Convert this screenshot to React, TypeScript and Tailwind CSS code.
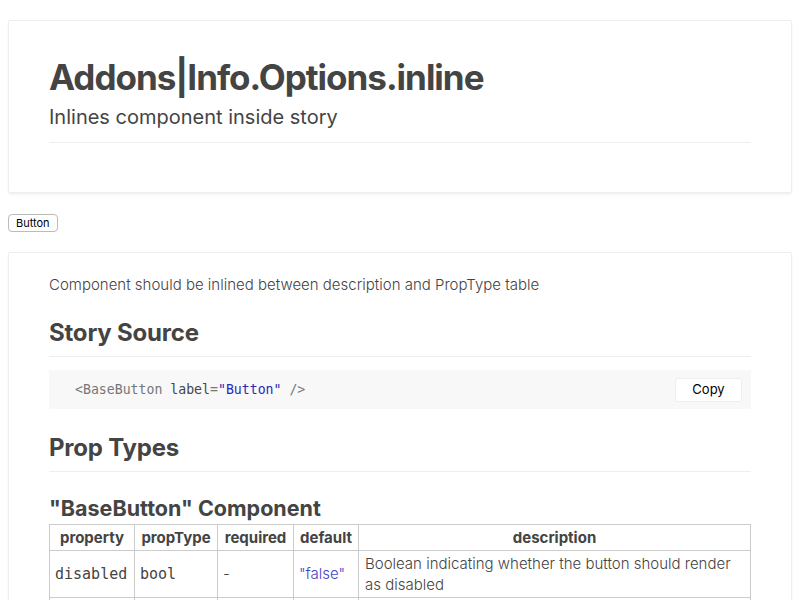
import React from "react";

const sans = { fontFamily: "Inter, 'Noto Sans', sans-serif" };

export default function App() {
  return (
    <div className="min-h-[600px] bg-white p-2 text-[#444]" style={sans}>
      <div className="mt-3 rounded-[2px] border border-[#eee] px-10 pb-[49px] pt-[34px] shadow-[0_2px_3px_rgba(0,0,0,0.05)]">
        <div className="border-b border-[#eee] pb-[11px]">
          <h1 className="m-0 text-[35px] font-bold leading-[44px] tracking-[-1px]">Addons|Info.Options.inline</h1>
          <h2 className="m-0 mt-1 text-[20px] font-normal leading-[28px]">Inlines component inside story</h2>
        </div>
      </div>

      <div className="mt-[21px] flex">
        <button className="h-[18px] rounded-[4px] border border-[#bbb] bg-white px-[7px] text-[11px] leading-[15px] text-black">Button</button>
      </div>

      <div className="mt-[20px] rounded-[2px] border border-[#eee] px-10 pt-[21px] pb-10 shadow-[0_2px_3px_rgba(0,0,0,0.05)]">
        <p className="m-0 text-[15px] font-light leading-[22px]">Component should be inlined between description and PropType table</p>

        <h1 className="mt-[21px] border-b border-[#eee] pb-[7px] text-[24px] font-bold leading-[32px] tracking-[-0.2px]">Story Source</h1>
        <div className="mt-[13px] flex h-[39px] items-center justify-between bg-[#f8f8f8] pl-[26px] pr-[9px]">
          <code className="text-[13.2px] text-[#777]" style={{ fontFamily: "'DejaVu Sans Mono', monospace" }}>
            &lt;BaseButton <span className="text-[#444]">label</span>=<span className="text-[#2a2ab8]">"Button"</span> /&gt;
          </code>
          <button className="mt-[1px] h-[24px] w-[67px] rounded-[3px] border border-[#eee] bg-white text-[13px] text-black">Copy</button>
        </div>

        <h1 className="mt-[23px] border-b border-[#eee] pb-[7px] text-[24px] font-bold leading-[32px] tracking-[-0.2px]">Prop Types</h1>
        <h2 className="mt-[22px] text-[21.5px] font-bold leading-[28px]">"BaseButton" Component</h2>
        <table className="mt-[2px] w-full table-fixed border-collapse text-[15px]">
          <colgroup>
            <col className="w-[85px]" />
            <col className="w-[83px]" />
            <col className="w-[76px]" />
            <col className="w-[65px]" />
            <col />
          </colgroup>
          <thead>
            <tr className="h-[26px]">
              {["property", "propType", "required", "default", "description"].map((h) => (
                <th key={h} className="border border-[#ccc] px-[5px] text-center font-bold leading-[20px]">{h}</th>
              ))}
            </tr>
          </thead>
          <tbody>
            <tr>
              <td className="border border-[#ccc] px-[5px] py-[2px] text-[15px] font-light" style={{ fontFamily: "'DejaVu Sans Mono', monospace" }}>disabled</td>
              <td className="border border-[#ccc] px-[5px] py-[2px] text-[15px] font-light" style={{ fontFamily: "'DejaVu Sans Mono', monospace" }}>bool</td>
              <td className="border border-[#ccc] px-[5px] py-[2px] font-light">-</td>
              <td className="border border-[#ccc] px-[5px] py-[2px] font-light text-[#4444cc]">"false"</td>
              <td className="border border-[#ccc] px-[6px] py-[2px] font-light leading-[21px]">Boolean indicating whether the button should render as disabled</td>
            </tr>
            <tr className="h-[40px]">
              <td className="border border-[#ccc]"></td>
              <td className="border border-[#ccc]"></td>
              <td className="border border-[#ccc]"></td>
              <td className="border border-[#ccc]"></td>
              <td className="border border-[#ccc]"></td>
            </tr>
          </tbody>
        </table>
      </div>
    </div>
  );
}
